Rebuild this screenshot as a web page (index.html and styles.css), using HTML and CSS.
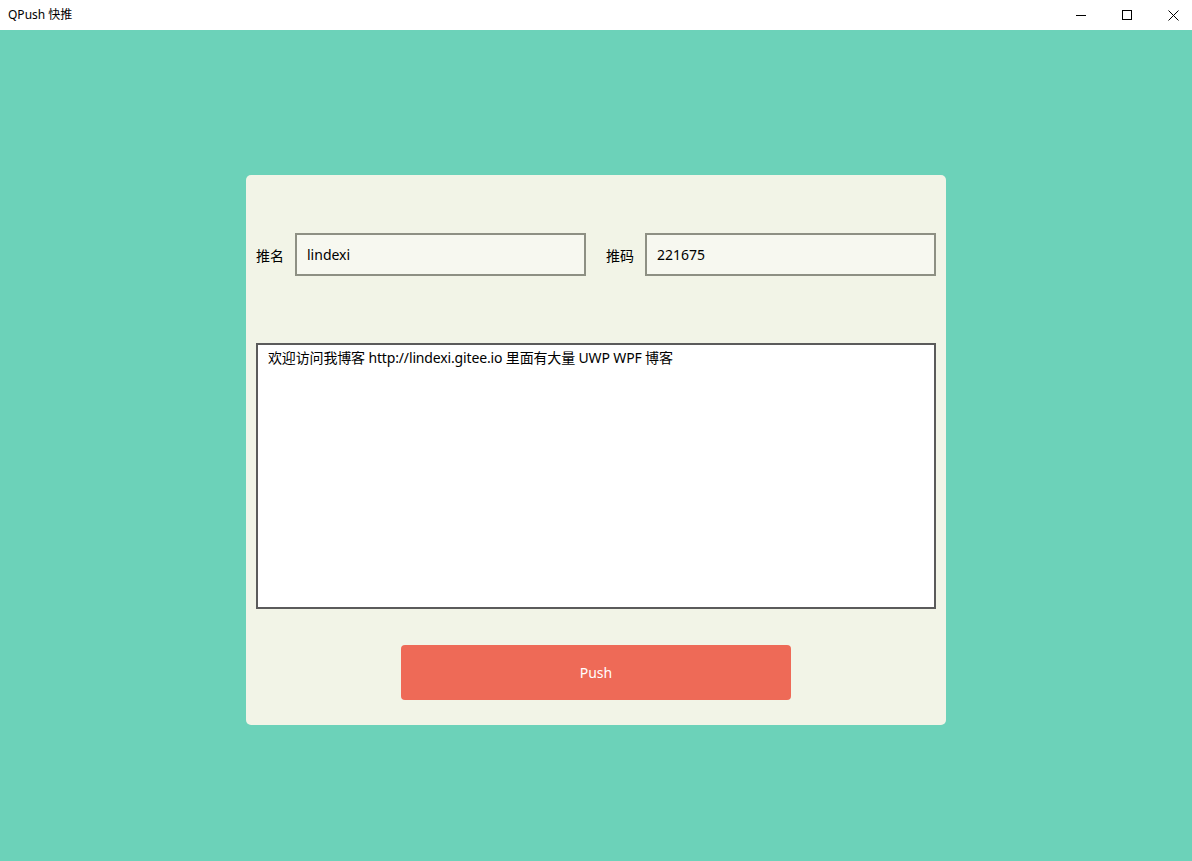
FILE: index.html
```html
<!DOCTYPE html>
<html lang="zh-CN">
<head>
<meta charset="utf-8">
<title>QPush 快推</title>
<link rel="stylesheet" href="styles.css">
</head>
<body>
<div class="window">
  <header class="titlebar">
    <div class="title">QPush 快推</div>
    <div class="controls">
      <div class="ctl"><svg width="10" height="10" viewBox="0 0 10 10"><path d="M0 5.5H10" stroke="#000" stroke-width="1"/></svg></div>
      <div class="ctl"><svg width="10" height="10" viewBox="0 0 10 10"><rect x="0.5" y="0.5" width="9" height="9" fill="none" stroke="#000" stroke-width="1"/></svg></div>
      <div class="ctl"><svg width="11" height="11" viewBox="0 0 11 11"><path d="M0.5 0.5L10.5 10.5M10.5 0.5L0.5 10.5" stroke="#000" stroke-width="1"/></svg></div>
    </div>
  </header>
  <main class="content">
    <section class="card">
      <div class="row">
        <div class="field">
          <span class="label">推名</span>
          <div class="input">lindexi</div>
        </div>
        <div class="field">
          <span class="label">推码</span>
          <div class="input">221675</div>
        </div>
      </div>
      <div class="textarea">欢迎访问我博客 http://lindexi.gitee.io 里面有大量 UWP WPF 博客</div>
      <div class="actions">
        <button class="push">Push</button>
      </div>
    </section>
  </main>
</div>
</body>
</html>
```
FILE: styles.css
```css
html, body {
  margin: 0;
  padding: 0;
}
body {
  font-family: "Noto Sans", "Noto Sans CJK SC", sans-serif;
  color: #000;
}
.window {
  width: 1192px;
  height: 861px;
  display: flex;
  flex-direction: column;
  overflow: hidden;
}
.titlebar {
  height: 30px;
  background: #ffffff;
  display: flex;
  align-items: center;
  justify-content: space-between;
  overflow: hidden;
}
.title {
  font-size: 12px;
  padding-left: 8px;
  line-height: 30px;
}
.controls {
  display: flex;
  height: 30px;
  margin-right: -4px;
}
.ctl {
  width: 46px;
  height: 30px;
  display: flex;
  align-items: center;
  justify-content: center;
}
.content {
  flex: 1;
  background: #6cd2b9;
  display: flex;
  justify-content: center;
  padding-top: 145px;
}
.card {
  width: 700px;
  height: 550px;
  box-sizing: border-box;
  padding: 58px 10px 0 10px;
  background: #f2f4e7;
  border-radius: 5px;
  display: flex;
  flex-direction: column;
}
.row {
  display: flex;
  gap: 20px;
}
.field {
  flex: 1;
  display: flex;
  align-items: center;
}
.label {
  width: 39px;
  font-size: 14px;
  flex: none;
}
.input {
  flex: 1;
  height: 43px;
  box-sizing: border-box;
  border: 2px solid #8e9084;
  background: #f7f8f0;
  padding: 0 10px;
  font-size: 14px;
  line-height: 39px;
}
.textarea {
  margin-top: 67px;
  height: 266px;
  box-sizing: border-box;
  border: 2px solid #5b5b5b;
  background: #ffffff;
  padding: 3px 10px;
  font-size: 14px;
  line-height: 20px;
  letter-spacing: -0.15px;
}
.actions {
  margin-top: 36px;
  display: flex;
  justify-content: center;
}
.push {
  width: 390px;
  height: 55px;
  border: none;
  border-radius: 4px;
  background: #ee6a57;
  color: #ffffff;
  font-family: "Noto Sans", sans-serif;
  font-size: 14px;
  padding: 0;
}
```
